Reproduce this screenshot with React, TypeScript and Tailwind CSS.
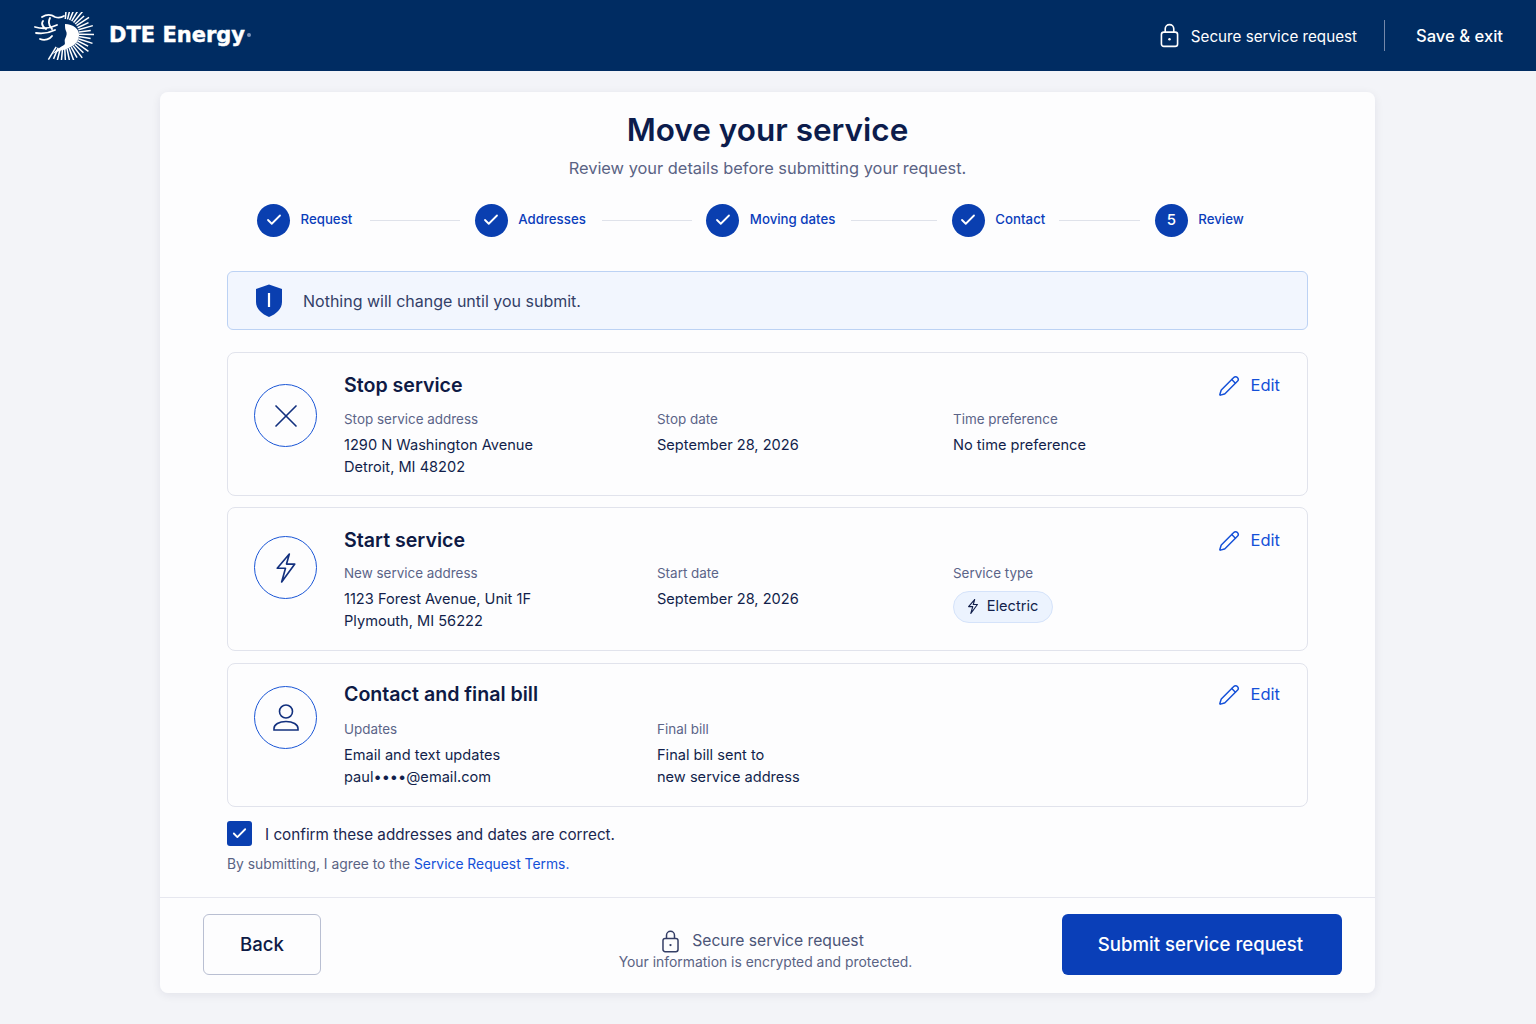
import React from 'react'
import { Check, Pencil, X } from 'lucide-react'

const font = { fontFamily: 'Inter, "Noto Sans", sans-serif' }

const LockIcon = ({ className }: { className?: string }) => (
  <svg viewBox="0 0 20 26" fill="none" stroke="currentColor" strokeWidth="1.7" className={className}>
    <rect x="1.5" y="9.5" width="17" height="15" rx="2.5" />
    <path d="M5.5 9.5V6a4.5 4.5 0 0 1 9 0v3.5" />
    <circle cx="10" cy="17" r="1.3" fill="currentColor" stroke="none" />
  </svg>
)

const Bolt = ({ className, strokeWidth = 1.6 }: { className?: string; strokeWidth?: number }) => (
  <svg viewBox="0 0 19 29" fill="none" stroke="currentColor" strokeWidth={strokeWidth} strokeLinejoin="round" className={className}>
    <path d="M12.7 1 1 14.7h8L5.300 28 18 10.700H10L12.700 1Z" />
  </svg>
)

const Logo = () => {
  // sunburst rays, going clockwise from the top round to the lower left
  const rays = Array.from({ length: 25 }, (_, i) => {
    const a = ((-85 + i * 8.6) * Math.PI) / 180
    const long = i % 2 === 0 ? 30 : 27
    return (
      <line
        key={i}
        x1={31 + Math.cos(a) * 15}
        y1={22 + Math.sin(a) * 15}
        x2={31 + Math.cos(a) * long}
        y2={22 + Math.sin(a) * long}
        stroke="white"
        strokeWidth="1.5"
      />
    )
  })
  return (
    <svg viewBox="0 0 62 48" className="h-[48px] w-[62px]" fill="none">
      {rays}
      <path d="M32 12c8 0 15 5 14 12-1 8-8 12-16 14-3 .6-7 2-10 4 3-5 8-7 11-9 2-1 0-4 1-6 2-4 2-6 1-8-1-2-1-4-1-7Z" fill="white" />
      <path d="M2 15c7 2 14 2 22-2M9 5c5-3 10-2 13 0 3 1 6 1 9-1M3 21c6 1 13 0 19-3M7 27c5 2 10 0 12-3M10 9c-2 3 0 6 3 8M17 6c-2 4-1 8 2 11" stroke="white" strokeWidth="1.8" strokeLinecap="round" />
    </svg>
  )
}

const steps = [
  { label: 'Request', line: 'ml-[18px] w-[90px]' },
  { label: 'Addresses', line: 'ml-[16px] w-[90px]' },
  { label: 'Moving dates', line: 'ml-[16px] w-[86px]' },
  { label: 'Contact', line: 'ml-[14px] w-[81px]' },
  { label: 'Review', line: '' },
]

const Stepper = () => (
  <div className="mt-[23px] ml-[97px] flex h-[34px] items-center">
    {steps.map((s, i) => (
      <React.Fragment key={s.label}>
        <div className="flex h-[33px] w-[33px] items-center justify-center rounded-full bg-[#0a3fb0] text-white">
          {i < 4 ? <Check size={18} strokeWidth={2.4} /> : <span className="text-[15px] font-medium">5</span>}
        </div>
        <span className="ml-[10.5px] text-[13.25px] font-medium text-[#0b3dbb]">{s.label}</span>
        {s.line && <div className={`mr-[14.5px] h-px bg-[#dfe2ea] ${s.line}`} />}
      </React.Fragment>
    ))}
  </div>
)

const Field = ({ label, lines, className }: { label: string; lines?: string[]; className: string }) => (
  <div className={className}>
    <div className="text-[13.45px] leading-[20px] text-[#5b6488]">{label}</div>
    {lines && (
      <div className="mt-[5px] text-[14.6px] leading-[22px] text-[#121f4b]">
        {lines.map((l) => (
          <div key={l}>{l}</div>
        ))}
      </div>
    )}
  </div>
)

const ReviewCard = ({
  icon,
  iconTop,
  top = 'pt-[18px]',
  rowTop = 'mt-[8px]',
  title,
  children,
}: {
  icon: React.ReactNode
  iconTop: string
  top?: string
  rowTop?: string
  title: string
  children: React.ReactNode
}) => (
  <div className={`flex h-[143.5px] rounded-[8px] border border-[#e1e3ec] pl-[26px] pr-[27px] ${top}`}>
    <div className={`flex h-[63px] w-[63px] shrink-0 items-center justify-center rounded-full border-[1.5px] border-[#1a56d6] text-[#12307e] ${iconTop}`}>
      {icon}
    </div>
    <div className="ml-[27px] flex-1">
      <div className="flex h-[30px] items-center justify-between">
        <h2 className="text-[19.6px] font-semibold text-[#0e1a45]">{title}</h2>
        <a className="-mt-[1px] flex items-center gap-[11px] text-[16.5px] text-[#1450d8]">
          <Pencil size={22} strokeWidth={1.6} />
          Edit
        </a>
      </div>
      <div className={`flex ${rowTop}`}>{children}</div>
    </div>
  </div>
)

const App: React.FC = () => {
  return (
    <div className="min-h-[1024px] bg-[#f3f4f8]" style={font}>
      <header className="flex h-[71px] items-center justify-between bg-[#002c62] pl-[33px] pr-[33px] text-white">
        <div className="flex items-center">
          <Logo />
          <span
            className="ml-[14px] text-[21px] font-bold [-webkit-text-stroke:0.4px_white]"
            style={{ fontFamily: '"DejaVu Sans", sans-serif' }}
          >
            DTE Energy
          </span>
          <span className="mb-[2px] ml-[2px] h-[4px] w-[4px] rounded-full bg-[#7d93b8]" />
        </div>
        <div className="flex items-center">
          <LockIcon className="h-[25px] w-[19px]" />
          <span className="ml-[12px] mt-[3px] text-[15.2px]">Secure service request</span>
          <div className="ml-[27px] mr-[31px] h-[31px] w-px bg-[#7488aa]" />
          <span className="mt-[1px] text-[16.6px] font-medium">Save &amp; exit</span>
        </div>
      </header>

      <main className="ml-[160px] mt-[21px] h-[901px] w-[1215px] rounded-[8px] bg-white/80 shadow-[0_2px_10px_rgba(20,30,70,0.08)]">
        <div className="h-[805px] pt-[17px]">
          <h1 className="text-center text-[31.5px] font-semibold leading-[42px] text-[#0c1c4c]">Move your service</h1>
          <p className="mt-[5px] text-center text-[16.4px] leading-[24px] text-[#5a6384]">
            Review your details before submitting your request.
          </p>
          <Stepper />

          <div className="mx-[67px] mt-[34px]">
            <div className="flex h-[59px] items-center rounded-[6px] border border-[#bcd2f4] bg-[#f2f6fe] pl-[27px]">
              <svg viewBox="0 0 28 33" className="h-[33px] w-[28px]">
                <path d="M14 .5 27 5v13c0 7-6 12-13 15C7 30 1 25 1 18V5L14 .5Z" fill="#0a3fb0" />
                <rect x="12.9" y="9" width="2.2" height="14" fill="white" />
              </svg>
              <span className="ml-[20px] text-[16px] text-[#333f68]">Nothing will change until you submit.</span>
            </div>

            <div className="mt-[22px] flex flex-col gap-[11.5px]">
              <ReviewCard iconTop="mt-[13px]" icon={<X size={40} strokeWidth={1} />} title="Stop service">
                <Field className="w-[313px]" label="Stop service address" lines={['1290 N Washington Avenue', 'Detroit, MI 48202']} />
                <Field className="w-[296px]" label="Stop date" lines={['September 28, 2026']} />
                <Field className="flex-1" label="Time preference" lines={['No time preference']} />
              </ReviewCard>
              <ReviewCard iconTop="mt-[10px]" rowTop="mt-[6.5px]" icon={<Bolt className="h-[30px] w-[20px]" />} title="Start service">
                <Field className="w-[313px]" label="New service address" lines={['1123 Forest Avenue, Unit 1F', 'Plymouth, MI 56222']} />
                <Field className="w-[296px]" label="Start date" lines={['September 28, 2026']} />
                <div className="flex-1">
                  <Field className="" label="Service type" />
                  <div className="mt-[8px] flex h-[32px] w-[100px] items-center justify-center gap-[9px] rounded-full border border-[#d5e3fa] bg-[#ecf3fe] text-[14.6px] text-[#121f4b]">
                    <Bolt className="h-[15px] w-[10px]" strokeWidth={2.2} />
                    Electric
                  </div>
                </div>
              </ReviewCard>
              <ReviewCard
                iconTop="mt-[6px]"
                top="mt-[1px] pt-[16px]"
                rowTop="mt-[9px]"
                icon={
                  <svg viewBox="0 0 26 27" className="h-[27px] w-[26px]" fill="none" stroke="currentColor" strokeWidth="1.6">
                    <circle cx="13" cy="7.500" r="6.500" />
                    <path d="M1 26v-1.500c0-4 5-7 12-7s12 3 12 7V26Z" />
                  </svg>
                }
                title="Contact and final bill"
              >
                <Field className="w-[313px]" label="Updates" lines={['Email and text updates', 'paul••••@email.com']} />
                <Field className="w-[296px]" label="Final bill" lines={['Final bill sent to', 'new service address']} />
              </ReviewCard>
            </div>

            <div className="mt-[14px] flex items-center">
              <div className="flex h-[25px] w-[25px] items-center justify-center rounded-[3px] bg-[#0a3fb0] text-white">
                <Check size={17} strokeWidth={2.6} />
              </div>
              <span className="ml-[13px] pt-[3px] text-[15.25px] text-[#1b2750]">I confirm these addresses and dates are correct.</span>
            </div>
            <p className="mt-[8px] text-[13.85px] text-[#5a6384]">
              By submitting, I agree to the <a className="text-[#1450d8]">Service Request Terms.</a>
            </p>
          </div>
        </div>

        <footer className="grid h-[96px] grid-cols-3 items-center border-t border-[#e6e7ef] pb-[3px] pl-[43px] pr-[33px]">
          <button className="h-[61px] w-[118px] rounded-[6px] border border-[#b9bfd2] pt-[2px] text-[18.6px] font-medium text-[#0e1a45]">
            Back
          </button>
          <div className="-ml-[14px] flex flex-col items-center pt-[14px] text-[#5a6384]">
            <div className="mr-[6px] flex items-center gap-[12px] text-[15.7px] text-[#4c5578]">
              <LockIcon className="h-[23px] w-[19px] text-[#343e66]" />
              Secure service request
            </div>
            <div className="-mt-[1px] text-[13.9px]">Your information is encrypted and protected.</div>
          </div>
          <div className="flex justify-end">
            <button className="h-[61px] w-[280px] rounded-[6px] bg-[#0a3fb8] pr-[3px] pt-[2px] text-[18.6px] font-medium text-white">
              Submit service request
            </button>
          </div>
        </footer>
      </main>
    </div>
  )
}

export default App
